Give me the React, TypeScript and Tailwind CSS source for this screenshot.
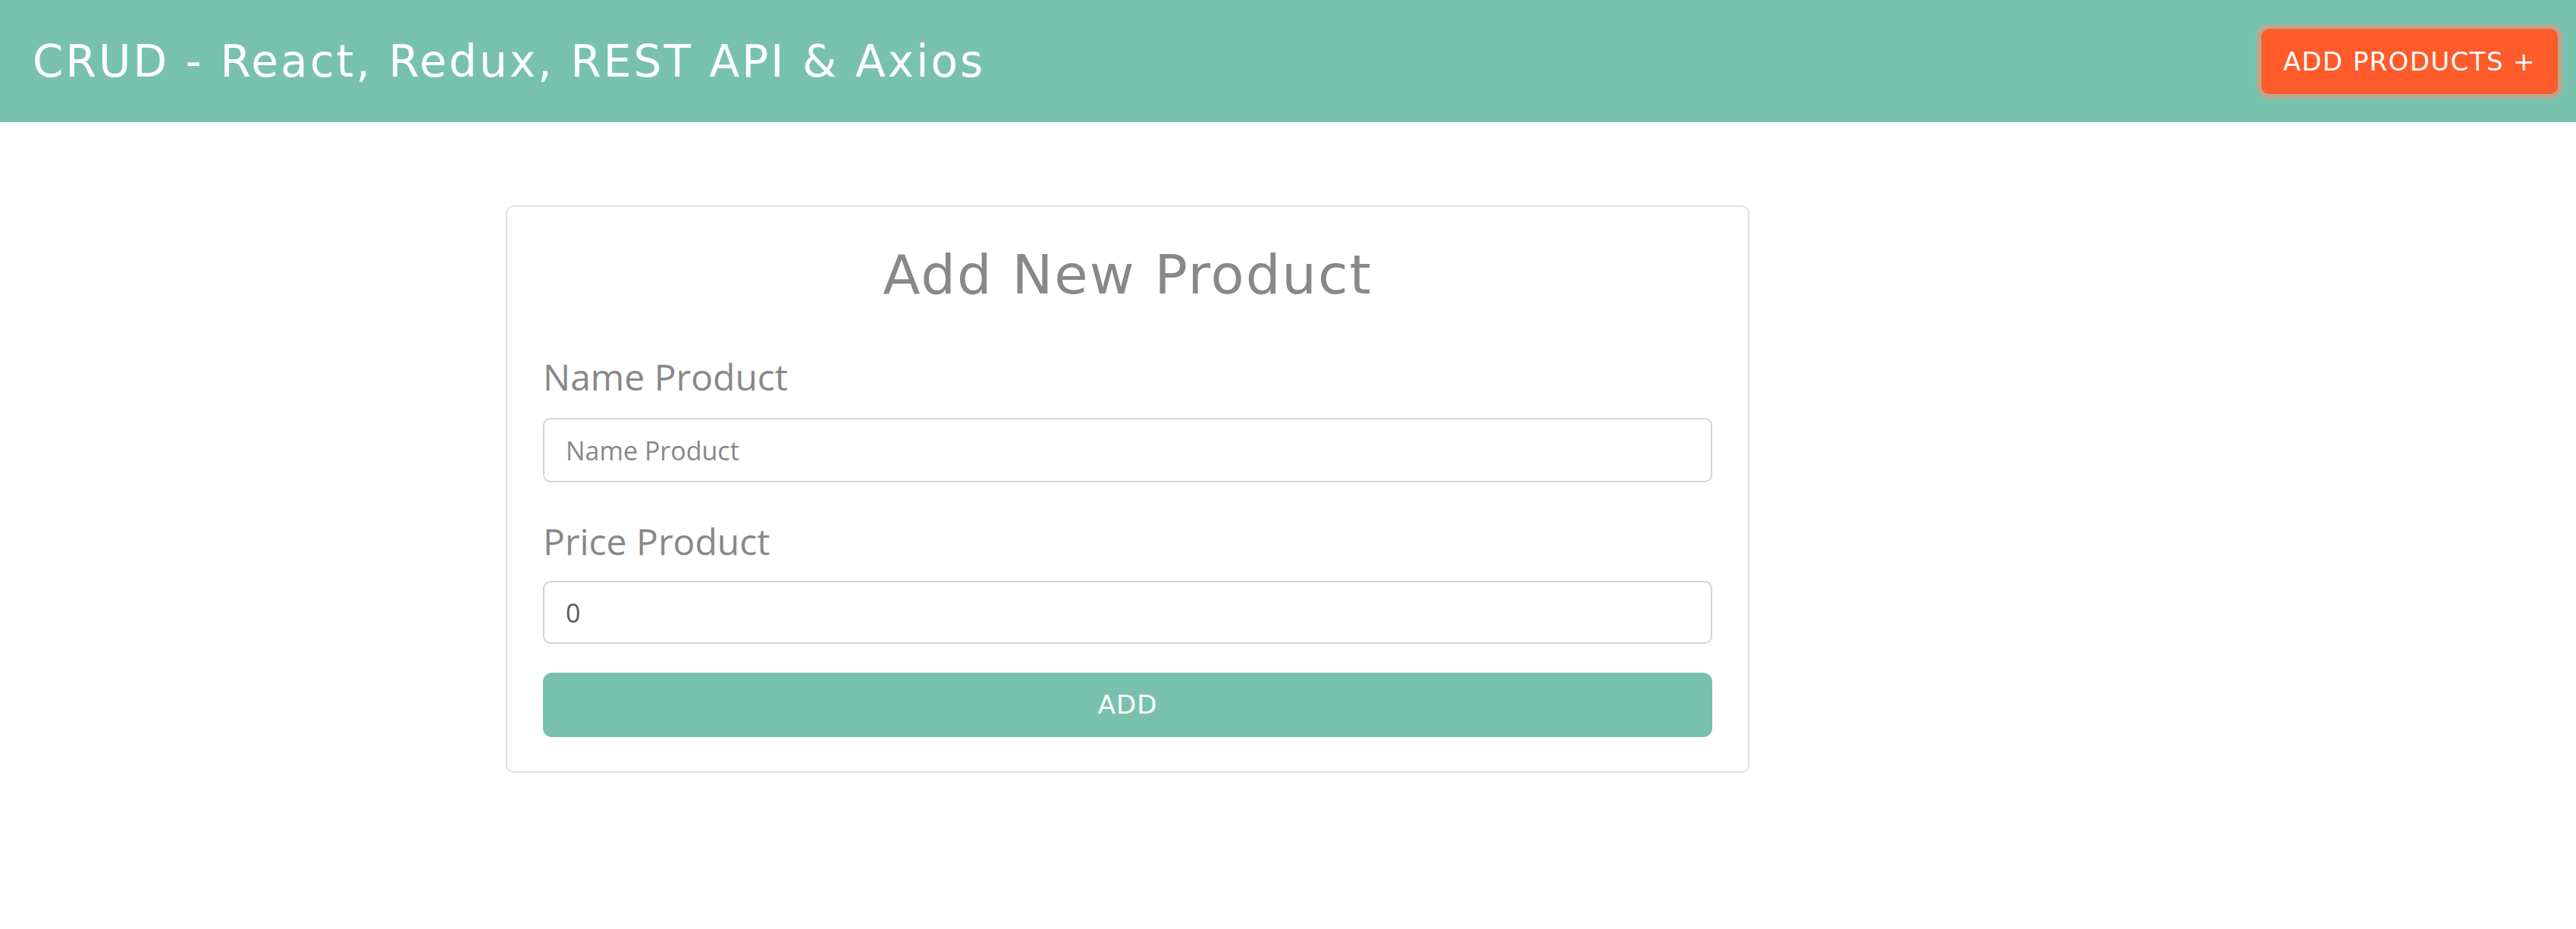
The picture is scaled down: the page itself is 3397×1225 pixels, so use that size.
export default function App() {
  return (
    <div className="min-h-screen bg-white">
      <nav className="flex h-[161px] items-center justify-between bg-[#78c2ad] pl-[43px] pr-[24px]">
        <h1 className="font-['DejaVu_Sans',sans-serif] text-[58px] font-normal leading-none tracking-[3.1px] text-white">
          CRUD - React, Redux, REST API &amp; Axios
        </h1>
        <button className="h-[86px] rounded-[10px] bg-[#ff5b2b] px-[29px] font-['DejaVu_Sans',sans-serif] text-[34px] leading-none tracking-[1.4px] text-white shadow-[0_0_0_6px_#bca78e]">
          ADD PRODUCTS +
        </button>
      </nav>

      <main className="pt-[110px]">
        <div className="ml-[667px] w-[1640px] rounded-[10px] border-2 border-[#e2e2e2] px-[47px] pt-[44px] pb-[45px]">
          <h2 className="mb-[60px] text-center font-['DejaVu_Sans',sans-serif] text-[72px] leading-[90px] tracking-[2px] text-[#888888]">
            Add New Product
          </h2>

          <form className="flex flex-col">
            <label className="mb-[24px] font-['Open_Sans',sans-serif] text-[48px] leading-[60px] text-[#888888]">
              Name Product
            </label>
            <input
              type="text"
              placeholder="Name Product"
              className="h-[85px] rounded-[10px] border-2 border-[#d4d4d8] px-[28px] font-['Open_Sans',sans-serif] text-[34px] text-[#5a5a5a] placeholder:text-[#888888] outline-none"
            />

            <label className="mt-[48px] mb-[22px] font-['Open_Sans',sans-serif] text-[48px] leading-[60px] text-[#888888]">
              Price Product
            </label>
            <input
              type="number"
              defaultValue={0}
              className="h-[83px] rounded-[10px] border-2 border-[#d4d4d8] px-[28px] font-['Open_Sans',sans-serif] text-[34px] text-[#5a5a5a] outline-none"
            />

            <button
              type="button"
              className="mt-[38px] h-[85px] w-full rounded-[12px] bg-[#78c2ad] font-['DejaVu_Sans',sans-serif] text-[34px] tracking-[1px] text-white"
            >
              ADD
            </button>
          </form>
        </div>
      </main>
    </div>
  );
}
